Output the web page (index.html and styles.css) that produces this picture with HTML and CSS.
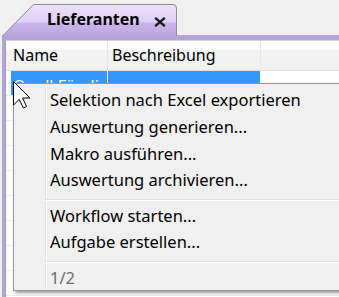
FILE: index.html
```html
<!DOCTYPE html>
<html lang="de">

<head>
    <meta charset="UTF-8">
    <meta name="viewport" content="width=device-width, initial-scale=1.0">
    <title>Lieferanten</title>
    <link rel="stylesheet" href="styles.css">
</head>

<body>
    <div class="tabbar">
        <div class="tab">
            <svg class="tab-shape" viewBox="0 0 175 32" preserveAspectRatio="none">
                <defs>
                    <linearGradient id="tabfill" x1="0" y1="0" x2="0" y2="1">
                        <stop offset="0" stop-color="#ede1fb" />
                        <stop offset="0.55" stop-color="#e0cff6" />
                        <stop offset="0.6" stop-color="#c8b6ea" />
                        <stop offset="1" stop-color="#b9a6df" />
                    </linearGradient>
                </defs>
                <path d="M0.5 32 L31.5 0.5 H171 Q174.5 0.5 174.5 4 V32" fill="url(#tabfill)" stroke="#8c8c8c" />
            </svg>
            <span class="tab-label">Lieferanten</span>
            <svg class="tab-close" viewBox="0 0 12 10">
                <path d="M1.2 0.8 L10.8 9.2 M10.8 0.8 L1.2 9.2" stroke="#1c1c1c" stroke-width="2.3" />
            </svg>
        </div>
    </div>

    <div class="panel">
        <div class="grid">
            <div class="row head">
                <div class="gap"></div>
                <div class="cell c1">Name</div>
                <div class="cell c2">Beschreibung</div>
                <div class="cell c3"></div>
            </div>
            <div class="row sel">
                <div class="gap"></div>
                <div class="cell c1">Opull Fändi</div>
                <div class="cell c2"></div>
                <div class="cell c3"></div>
            </div>
            <div class="row"></div>
            <div class="row"></div>
            <div class="row"></div>
            <div class="row"></div>
            <div class="row"></div>
            <div class="row"></div>
            <div class="row"></div>
            <div class="row"></div>
        </div>
    </div>

    <div class="menu">
        <div class="item">Selektion nach Excel exportieren</div>
        <div class="item">Auswertung generieren...</div>
        <div class="item">Makro ausführen...</div>
        <div class="item">Auswertung archivieren...</div>
        <div class="sep"></div>
        <div class="item">Workflow starten...</div>
        <div class="item">Aufgabe erstellen...</div>
        <div class="sep sep2"></div>
        <div class="item off">1/2</div>
    </div>

    <svg class="cursor" viewBox="0 0 18 28">
        <path d="M0.5 0.5 V24 L6.2 18.4 L10.4 27 L13.6 25.5 L9.5 17 H17 Z" fill="#fff" stroke="#000" stroke-width="1" stroke-linejoin="miter" />
    </svg>
</body>

</html>
```

FILE: styles.css
```css
body {
    margin: 0;
    height: 297px;
    overflow: hidden;
    position: relative;
    background: #f0f0f0;
    font-family: "Noto Sans", "Open Sans", sans-serif;
    font-size: 16px;
    color: #000;
}

.tabbar {
    height: 35px;
    padding-left: 2px;
    box-sizing: border-box;
    padding-top: 4px;
}

.tab {
    position: relative;
    width: 175px;
    height: 31px;
    display: flex;
    align-items: center;
}

.tab-shape {
    position: absolute;
    left: 0;
    top: 0;
    width: 175px;
    height: 32px;
}

.tab-label {
    position: relative;
    margin-left: 45px;
    margin-top: -1px;
    font-weight: bold;
    font-size: 16px;
}

.tab-close {
    position: relative;
    width: 12px;
    height: 10px;
    margin-left: 14px;
    margin-top: 5px;
}

.panel {
    margin-left: 2px;
    padding: 5px 0 0 3px;
    background: #b5a3da;
    height: 262px;
}

.grid {
    background: #fff;
    border-left: 1px solid #a3a3a3;
    border-top: 1px solid #d6d6d6;
    height: 100%;
}

.row {
    display: flex;
    height: 25px;
    border-bottom: 1px solid #ececec;
    box-sizing: border-box;
}

.gap {
    width: 5px;
}

.cell {
    white-space: nowrap;
    overflow: hidden;
    box-sizing: border-box;
}

.c1 {
    width: 97px;
    padding-left: 2px;
    border-right: 1px solid #e6e6e6;
}

.c2 {
    width: 153px;
    padding-left: 4px;
    border-right: 1px solid #e6e6e6;
}

.c3 {
    flex: 1;
}

.head {
    height: 30px;
    line-height: 29px;
    background: linear-gradient(#ffffff 0, #ffffff 28%, #f3f3f3 32%, #f1f1f1 100%);
    border-bottom: 1px solid #e2e2e2;
}

.sel {
    line-height: 24px;
}

.sel .c1 {
    padding-top: 3px;
}

.sel .c1,
.sel .c2 {
    background: #3399ff;
    color: #fff;
    border-right-color: #fff;
}

.menu {
    position: absolute;
    left: 13px;
    top: 83px;
    width: 345px;
    height: 208px;
    box-sizing: border-box;
    overflow: hidden;
    border: 1px solid #979797;
    padding-top: 3.4px;
    background: linear-gradient(90deg, #f0f0f0 31px, #e2e3e3 31px, #e2e3e3 32px, #ffffff 32px, #ffffff 33px, #f0f0f0 33px);
    box-shadow: 2px 2px 3px rgba(0, 0, 0, 0.4);
    font-size: 16.5px;
}

.item {
    height: 26.6px;
    line-height: 26.6px;
    padding-left: 36px;
    white-space: nowrap;
}

.item.off {
    color: #6d6d6d;
}

.sep {
    margin: 5.2px 0 1.8px 31px;
    height: 1px;
    background: #e0e0e0;
    border-bottom: 1px solid #fff;
}

.sep2 {
    margin-top: 4.7px;
    margin-bottom: 2.4px;
}

.cursor {
    position: absolute;
    left: 12.5px;
    top: 81px;
    width: 18px;
    height: 28px;
}
```
